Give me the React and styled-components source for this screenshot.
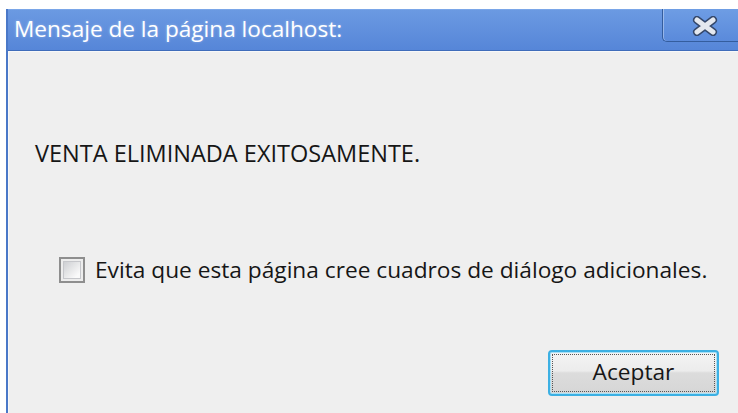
import React from "react";
import styled, { createGlobalStyle } from "styled-components";

const GlobalStyle = createGlobalStyle`
  html, body {
    margin: 0;
    padding: 0;
    width: 738px;
    height: 413px;
    overflow: hidden;
    background: #fff;
  }
  * {
    box-sizing: border-box;
  }
`;

const Page = styled.div`
  width: 738px;
  height: 413px;
  padding: 9px 0 0 6px;
  background: #fff;
  font-family: "Open Sans", "Noto Sans", sans-serif;
  overflow: hidden;
`;

const Window = styled.div`
  display: flex;
  flex-direction: column;
  height: 100%;
  border-left: 2px solid #4a78c8;
  background: #efefef;
`;

const TitleBar = styled.div`
  flex: none;
  display: flex;
  align-items: flex-start;
  justify-content: space-between;
  height: 42px;
  background: linear-gradient(#6b9ae2, #5686d8);
  border-top: 1px solid #7aa6e8;
  border-bottom: 1px solid #3f6cba;
`;

const Title = styled.span`
  padding: 3px 0 0 6px;
  color: #fff;
  font-size: 22.6px;
  text-shadow: 0 0 3px rgba(255, 255, 255, 0.35);
`;

const CloseButton = styled.div`
  flex: none;
  display: flex;
  align-items: center;
  justify-content: center;
  width: 76px;
  height: 33px;
  margin-top: -1px;
  padding: 1px 0 0 8px;
  border: 1px solid #345d9e;
  border-top: none;
  border-right: none;
  border-bottom-left-radius: 5px;
  background: linear-gradient(#6e9de4, #5a8adb);
  box-shadow: inset 1px 0 0 rgba(255, 255, 255, 0.35);
`;

const Body = styled.div`
  flex: 1;
  display: flex;
  flex-direction: column;
  padding: 87px 19px 0 26px;
  border-left: 1px solid #f8f8f8;
  border-top: 1px solid #f8f8f8;
  color: #161616;
`;

const Message = styled.p`
  margin: 0;
  font-size: 23.5px;
  line-height: 28px;
`;

const CheckRow = styled.label`
  display: flex;
  align-items: center;
  gap: 10px;
  margin: 89px 0 0 24px;
  font-size: 22.7px;
  line-height: 28px;
`;

const Box = styled.span`
  flex: none;
  width: 26px;
  height: 26px;
  border: 2px solid #8e8e8e;
  box-shadow: inset 0 0 0 2px #ededed, inset 0 0 0 3px #c6c7cb;
  background: linear-gradient(135deg, #c4c6ca, #fafafa 75%);
`;

const Footer = styled.div`
  display: flex;
  justify-content: flex-end;
  margin-top: 66px;
`;

const Button = styled.button`
  position: relative;
  width: 171px;
  height: 46px;
  border: 2px solid #3cb0e3;
  border-radius: 4px;
  background: linear-gradient(#f4f4f4 0%, #ececec 45%, #dcdcdc 50%, #d6d6d6 100%);
  color: #161616;
  font-family: "Open Sans", "Noto Sans", sans-serif;
  font-size: 22.7px;
  line-height: 28px;
  padding: 0 0 3px;
  box-shadow: inset 0 0 0 1px #a8e0f6;

  &::after {
    content: "";
    position: absolute;
    inset: 2px;
    border: 1px dotted #555;
  }
`;

// chunky "x" of the caption close button
const CloseGlyph = () => (
  <svg width="26" height="20" viewBox="0 0 26 20">
    <path
      d="M5 4 L21 16 M21 4 L5 16"
      stroke="#34476a"
      strokeWidth="8"
      strokeLinecap="round"
    />
    <path
      d="M5 4 L21 16 M21 4 L5 16"
      stroke="#e4e8ef"
      strokeWidth="5"
      strokeLinecap="round"
    />
  </svg>
);

export default function App() {
  return (
    <>
      <GlobalStyle />
      <Page>
        <Window>
          <TitleBar>
            <Title>Mensaje de la página localhost:</Title>
            <CloseButton>
              <CloseGlyph />
            </CloseButton>
          </TitleBar>
          <Body>
            <Message>VENTA ELIMINADA EXITOSAMENTE.</Message>
            <CheckRow>
              <Box />
              Evita que esta página cree cuadros de diálogo adicionales.
            </CheckRow>
            <Footer>
              <Button>Aceptar</Button>
            </Footer>
          </Body>
        </Window>
      </Page>
    </>
  );
}
